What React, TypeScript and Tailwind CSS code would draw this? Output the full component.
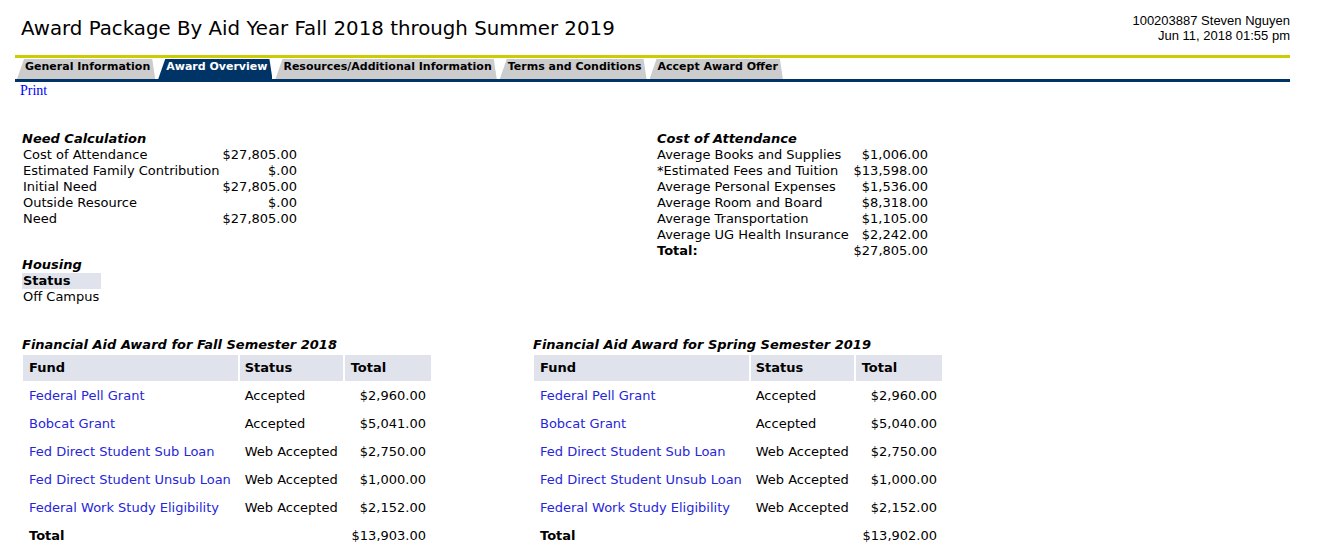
const font = "[font-family:'DejaVu_Sans',Verdana,sans-serif]";

const needRows = [
  ["Cost of Attendance", "$27,805.00"],
  ["Estimated Family Contribution", "$.00"],
  ["Initial Need", "$27,805.00"],
  ["Outside Resource", "$.00"],
  ["Need", "$27,805.00"],
];

const costRows = [
  ["Average Books and Supplies", "$1,006.00"],
  ["*Estimated Fees and Tuition", "$13,598.00"],
  ["Average Personal Expenses", "$1,536.00"],
  ["Average Room and Board", "$8,318.00"],
  ["Average Transportation", "$1,105.00"],
  ["Average UG Health Insurance", "$2,242.00"],
];

const tabs = [
  "General Information",
  "Award Overview",
  "Resources/Additional Information",
  "Terms and Conditions",
  "Accept Award Offer",
];

type Award = { fund: string; status: string; total: string };

const fall: Award[] = [
  { fund: "Federal Pell Grant", status: "Accepted", total: "$2,960.00" },
  { fund: "Bobcat Grant", status: "Accepted", total: "$5,041.00" },
  { fund: "Fed Direct Student Sub Loan", status: "Web Accepted", total: "$2,750.00" },
  { fund: "Fed Direct Student Unsub Loan", status: "Web Accepted", total: "$1,000.00" },
  { fund: "Federal Work Study Eligibility", status: "Web Accepted", total: "$2,152.00" },
];

const spring: Award[] = [
  { fund: "Federal Pell Grant", status: "Accepted", total: "$2,960.00" },
  { fund: "Bobcat Grant", status: "Accepted", total: "$5,040.00" },
  { fund: "Fed Direct Student Sub Loan", status: "Web Accepted", total: "$2,750.00" },
  { fund: "Fed Direct Student Unsub Loan", status: "Web Accepted", total: "$1,000.00" },
  { fund: "Federal Work Study Eligibility", status: "Web Accepted", total: "$2,152.00" },
];

const AwardTable = ({ title, rows, total }: { title: string; rows: Award[]; total: string }) => {
  return (
    <div className="w-[412px]">
      <div className="pl-[1px] text-[13px] leading-[16px] font-bold italic">{title}</div>
      <table className="border-separate border-spacing-[2px] text-[13px] whitespace-nowrap">
        <thead>
          <tr className="h-[26px] bg-[#e1e3ec] font-bold text-left">
            <th className="w-[215px] px-[6px]">Fund</th>
            <th className="w-[102px] px-[5px]">Status</th>
            <th className="w-[87px] px-[6px]">Total</th>
          </tr>
        </thead>
        <tbody>
          {rows.map((r) => (
            <tr key={r.fund} className="h-[26px]">
              <td className="px-[6px] text-[#2626d9]">{r.fund}</td>
              <td className="px-[5px]">{r.status}</td>
              <td className="px-[5px] text-right">{r.total}</td>
            </tr>
          ))}
          <tr className="h-[26px]">
            <td className="px-[6px] font-bold">Total</td>
            <td></td>
            <td className="px-[5px] text-right">{total}</td>
          </tr>
        </tbody>
      </table>
    </div>
  );
};

const App = () => {
  return (
    <div className={`bg-white text-black w-[1327px] h-[560px] overflow-hidden ${font}`}>
      <div className="ml-[15px] w-[1275px]">
        {/* header */}
        <div className="flex justify-between items-start h-[55px]">
          <h1 className="pl-[6px] pt-[17px] text-[19.8px] leading-[24px]">
            Award Package By Aid Year Fall 2018 through Summer 2019
          </h1>
          <div className="pt-[13px] text-right text-[13px] leading-[15px] [font-family:'Liberation_Sans',Tahoma,sans-serif]">
            <div>100203887 Steven Nguyen</div>
            <div>Jun 11, 2018 01:55 pm</div>
          </div>
        </div>
        <div className="h-[3px] bg-[#cccc00]" />

        {/* tabs */}
        <div className="flex items-end gap-[3px] pl-[2px] mt-[1px] h-[20px]">
          {tabs.map((t) => (
            <div
              key={t}
              className={`h-[20px] pl-[8px] pr-[5px] pt-[1px] text-[11px] leading-[14px] font-bold whitespace-nowrap [clip-path:polygon(7px_0,calc(100%-3px)_0,100%_100%,0_100%)] ${
                t === "Award Overview" ? "bg-[#003366] text-white" : "bg-[#cccccc] text-black"
              }`}
            >
              {t}
            </div>
          ))}
        </div>
        <div className="h-[3px] bg-[#003366]" />
        <div className="pl-[5px] text-[14px] leading-[18px] [font-family:'Liberation_Serif',serif] text-[#0000ff]">
          Print
        </div>

        {/* need + cost */}
        <div className="flex mt-[31px] text-[13px] leading-[16px]">
          <div className="w-[642px] pl-[7px]">
            <div className="font-bold italic">Need Calculation</div>
            {needRows.map(([l, v]) => (
              <div key={l} className="flex w-[275px] pl-[1px]">
                <span className="flex-1">{l}</span>
                <span>{v}</span>
              </div>
            ))}
            <div className="mt-[30px] font-bold italic">Housing</div>
            <div className="w-[79px] bg-[#e1e3ec] font-bold pl-[1px]">Status</div>
            <div className="pl-[1px]">Off Campus</div>
          </div>
          <div>
            <div className="font-bold italic">Cost of Attendance</div>
            {costRows.map(([l, v]) => (
              <div key={l} className="flex w-[271px]">
                <span className="flex-1">{l}</span>
                <span>{v}</span>
              </div>
            ))}
            <div className="flex w-[271px]">
              <span className="flex-1 font-bold">Total:</span>
              <span>$27,805.00</span>
            </div>
          </div>
        </div>

        {/* awards */}
        <div className="flex gap-[99px] mt-[32px] pl-[6px]">
          <AwardTable title="Financial Aid Award for Fall Semester 2018" rows={fall} total="$13,903.00" />
          <AwardTable title="Financial Aid Award for Spring Semester 2019" rows={spring} total="$13,902.00" />
        </div>
      </div>
    </div>
  );
};

export default App;
